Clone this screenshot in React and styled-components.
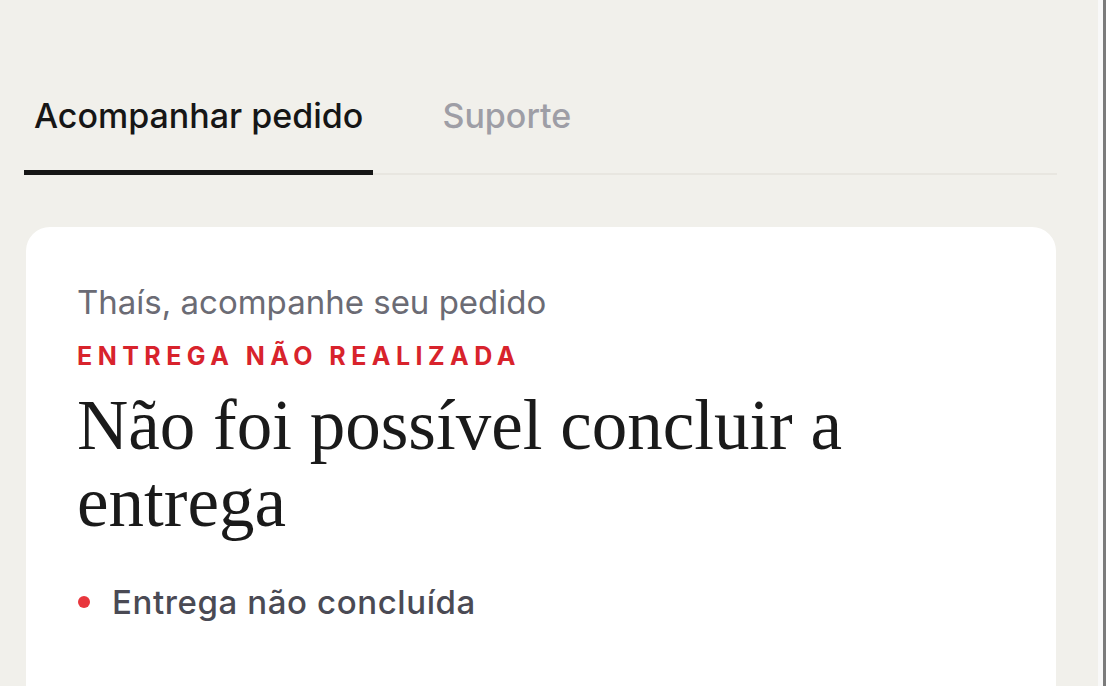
import React from "react";
import styled, { createGlobalStyle } from "styled-components";

const GlobalStyle = createGlobalStyle`
  html, body {
    margin: 0;
    padding: 0;
    height: 100%;
    overflow: hidden;
  }
  body {
    background: #f1f0eb;
    font-family: Inter, "Noto Sans", sans-serif;
    -webkit-font-smoothing: antialiased;
  }
  #root {
    height: 100%;
  }
`;

const Page = styled.div`
  display: flex;
  height: 686px;
  background: #f1f0eb;
`;

const Main = styled.main`
  flex: 1;
  min-width: 0;
  padding: 96px 41px 0 24px;
  display: flex;
  flex-direction: column;
`;

const EdgeStrip = styled.div`
  width: 5px;
  background: #f8f8f8;
  border-right: 3px solid #7b7b7b;
`;

const TabList = styled.nav`
  display: flex;
  gap: 59px;
  box-shadow: inset 0 -2px 0 #e8e6e0;
`;

const Tab = styled.button`
  appearance: none;
  background: none;
  border: none;
  border-bottom: 5px solid ${p => (p.$active ? "#161616" : "transparent")};
  padding: 0 10px 34px 10px;
  margin: 0;
  font-family: Inter, "Noto Sans", sans-serif;
  font-size: 34px;
  line-height: 40px;
  font-weight: 500;
  color: ${p => (p.$active ? "#161616" : "#9e9ea6")};
  cursor: pointer;
`;

const Card = styled.section`
  margin: 52px 1px 0 2px;
  flex: 1;
  background: #ffffff;
  border-radius: 24px 24px 0 0;
  padding: 55px 51px 0;
  display: flex;
  flex-direction: column;
`;

const Greeting = styled.p`
  margin: 0;
  font-size: 33px;
  line-height: 40px;
  color: #6b6b74;
`;

const StatusLabel = styled.p`
  margin: 19px 0 0;
  font-size: 25px;
  line-height: 30px;
  font-weight: 700;
  letter-spacing: 5.45px;
  color: #d8232c;
`;

const Heading = styled.h2`
  margin: 16px 0 0;
  font-family: "Liberation Serif", "Times New Roman", serif;
  font-weight: 400;
  font-size: 71px;
  line-height: 77px;
  color: #1a1a1a;
  max-width: 820px;
`;

const StatusRow = styled.div`
  margin-top: 41px;
  padding-left: 1px;
  display: flex;
  align-items: center;
  gap: 22px;
`;

const Dot = styled.span`
  width: 12px;
  height: 12px;
  border-radius: 50%;
  background: ${p => p.$color};
  flex-shrink: 0;
`;

const StatusText = styled.span`
  font-size: 33px;
  line-height: 40px;
  font-weight: 500;
  letter-spacing: 0.6px;
  color: #4a4a54;
`;

export default function App() {
  return (
    <>
      <GlobalStyle />
      <Page>
        <Main>
          <TabList>
            <Tab $active>Acompanhar pedido</Tab>
            <Tab>Suporte</Tab>
          </TabList>
          <Card>
            <Greeting>Thaís, acompanhe seu pedido</Greeting>
            <StatusLabel>ENTREGA NÃO REALIZADA</StatusLabel>
            <Heading>Não foi possível concluir a entrega</Heading>
            <StatusRow>
              <Dot $color="#e8363d" />
              <StatusText>Entrega não concluída</StatusText>
            </StatusRow>
          </Card>
        </Main>
        <EdgeStrip />
      </Page>
    </>
  );
}
